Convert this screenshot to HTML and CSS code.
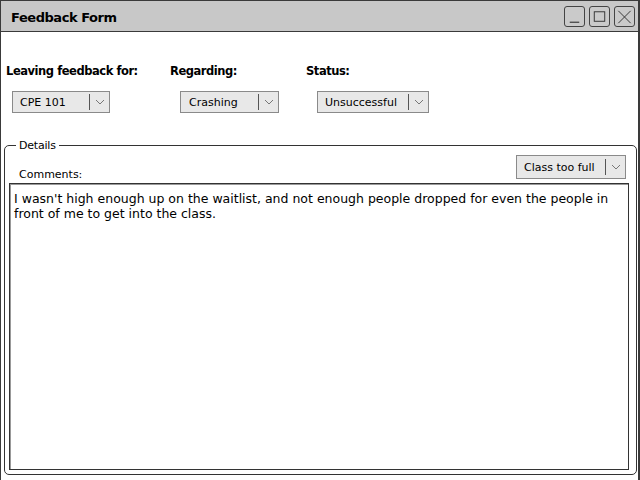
FILE: index.html
```html
<!DOCTYPE html>
<html>
<head>
<meta charset="utf-8">
<link rel="stylesheet" href="styles.css">
</head>
<body>
<div class="window">
  <div class="titlebar">
    <span class="title">Feedback Form</span>
    <div class="wbtns">
      <span class="wbtn"><svg width="20" height="20" viewBox="0 0 20 20"><path d="M5 15.5H15" stroke="#333" stroke-width="1.2" fill="none"/></svg></span>
      <span class="wbtn"><svg width="20" height="20" viewBox="0 0 20 20"><rect x="4.5" y="4.5" width="11" height="10" stroke="#333" stroke-width="1" fill="none"/></svg></span>
      <span class="wbtn"><svg width="20" height="20" viewBox="0 0 20 20"><path d="M3.5 3.5L16.5 16.5M16.5 3.5L3.5 16.5" stroke="#333" stroke-width="1" fill="none"/></svg></span>
    </div>
  </div>
  <div class="content">
    <div class="toprow">
      <div class="col col1">
        <div class="label">Leaving feedback for:</div>
        <div class="combo combo1"><span class="ctext">CPE 101</span><span class="carrow"><svg width="10" height="6" viewBox="0 0 10 6"><path d="M1 1L5 5L9 1" stroke="#777" stroke-width="1" fill="none"/></svg></span></div>
      </div>
      <div class="col col2">
        <div class="label">Regarding:</div>
        <div class="combo combo2"><span class="ctext">Crashing</span><span class="carrow"><svg width="10" height="6" viewBox="0 0 10 6"><path d="M1 1L5 5L9 1" stroke="#777" stroke-width="1" fill="none"/></svg></span></div>
      </div>
      <div class="col col3">
        <div class="label">Status:</div>
        <div class="combo combo3"><span class="ctext">Unsuccessful</span><span class="carrow"><svg width="10" height="6" viewBox="0 0 10 6"><path d="M1 1L5 5L9 1" stroke="#777" stroke-width="1" fill="none"/></svg></span></div>
      </div>
    </div>
    <fieldset class="details">
      <legend>Details</legend>
      <div class="detrow">
        <span class="comments">Comments:</span>
        <div class="combo combo4"><span class="ctext">Class too full</span><span class="carrow"><svg width="10" height="6" viewBox="0 0 10 6"><path d="M1 1L5 5L9 1" stroke="#777" stroke-width="1" fill="none"/></svg></span></div>
      </div>
      <div class="textarea">I wasn't high enough up on the waitlist, and not enough people dropped for even the people in front of me to get into the class.</div>
    </fieldset>
  </div>
</div>
</body>
</html>
```

FILE: styles.css
```css
* { box-sizing: border-box; }
html, body { margin: 0; padding: 0; background: #fff; }
body { font-family: "DejaVu Sans", sans-serif; color: #000; }
.window {
  width: 640px;
  height: 480px;
  border-left: 1px solid #3a3a3a;
  border-top: 1px solid #3a3a3a;
  border-right: 2px solid #3a3a3a;
  display: flex;
  flex-direction: column;
}
.titlebar {
  height: 31px;
  background: #c8c8c8;
  border-bottom: 1px solid #3a3a3a;
  display: flex;
  align-items: center;
  justify-content: space-between;
  padding: 0 3px 0 10px;
}
.title { font-weight: bold; font-size: 13px; letter-spacing: -0.45px; margin-top: 3px; }
.wbtns { display: flex; gap: 4px; margin-top: 1px; }
.wbtn {
  width: 21px; height: 21px;
  border: 1px solid #444;
  border-radius: 3px;
  background: #cacaca;
  display: flex; align-items: center; justify-content: center;
}
.content { flex: 1; display: flex; flex-direction: column; padding: 0 1px 5px 3px; }
.toprow { display: flex; padding-top: 30px; height: 107px; }
.col { display: flex; flex-direction: column; }
.col1 { width: 166px; padding-left: 2px; }
.col2 { width: 135px; }
.col3 { width: 200px; padding-left: 1px; }
.label { font-weight: bold; font-size: 11.5px; letter-spacing: -0.45px; height: 18px; line-height: 18px; }
.combo {
  margin-top: 11px;
  height: 22px;
  background: #e8e8e8;
  border: 1px solid #8a8a8a;
  display: flex; align-items: center;
  font-size: 11px;
}
.ctext { flex: 1; padding-left: 7px; }
.carrow {
  width: 20px; height: 16px;
  border-left: 1px solid #555;
  display: flex; align-items: center; justify-content: center;
}
.combo1 { width: 98px; margin-left: 6px; }
.combo2 { width: 99px; margin-left: 10px; }
.combo2 .ctext { padding-left: 8px; }
.combo3 { width: 112px; margin-left: 11px; }
.details {
  flex: 1;
  margin: 0;
  border: 1px solid #333;
  border-radius: 5px;
  padding: 0 7px 4px 4px;
  display: flex; flex-direction: column;
  min-width: 0;
}
.details legend { font-size: 11px; letter-spacing: -0.2px; padding: 0 3px; margin-left: 7px; }
.detrow { display: flex; justify-content: space-between; align-items: flex-end; height: 31px; padding-bottom: 4px; }
.comments { font-size: 11px; letter-spacing: 0; padding-left: 10px; margin-bottom: -2px; }
.combo4 { width: 110px; margin-top: 0; height: 24px; margin-right: 3px; }
.textarea {
  flex: 1;
  border: 1px solid #333;
  box-shadow: inset 1px 1px 0 #999;
  padding: 7px 4px 5px;
  font-size: 12.5px;
  letter-spacing: 0;
  line-height: 15px;
}
```
